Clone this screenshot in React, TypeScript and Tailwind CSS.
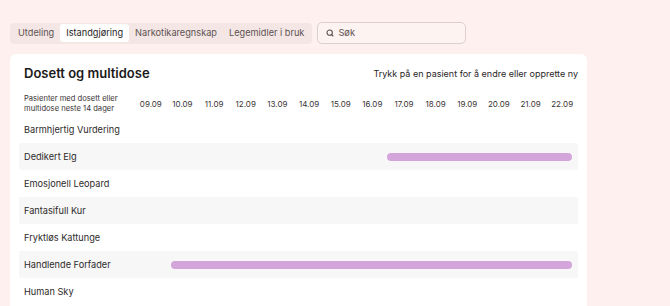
import React from "react";
import { Search } from "lucide-react";

const tabs = ["Utdeling", "Istandgjøring", "Narkotikaregnskap", "Legemidler i bruk"];

const dates = [
    "09.09", "10.09", "11.09", "12.09", "13.09", "14.09", "15.09",
    "16.09", "17.09", "18.09", "19.09", "20.09", "21.09", "22.09",
];

type Patient = { name: string; from?: number; to?: number };

// from/to are day indexes into the 14-day window (inclusive)
const patients: Patient[] = [
    { name: "Barmhjertig Vurdering" },
    { name: "Dedikert Elg", from: 8, to: 13 },
    { name: "Emosjonell Leopard" },
    { name: "Fantasifull Kur" },
    { name: "Fryktløs Kattunge" },
    { name: "Handlende Forfader", from: 1, to: 13 },
    { name: "Human Sky" },
];

const App: React.FC = () => {
    return (
        <div className="w-[670px] h-[306px] overflow-hidden bg-[#fdf0ee] font-['Inter',sans-serif] text-[#2a2626]">
            <div className="flex items-center gap-[5px] pl-[10px] pt-[22px]">
                <div className="flex items-center h-[21px] px-[2px] rounded-[4px] bg-[#f3e6e4]">
                    {tabs.map((tab, i) => (
                        <div
                            key={tab}
                            className={
                                i === 1
                                    ? "h-[18px] flex items-center px-[6px] rounded-[3px] bg-white text-[9.2px] text-[#1f1c1c]"
                                    : "h-[18px] flex items-center px-[6px] text-[9.2px] text-[#5e5252]"
                            }
                        >
                            {tab}
                        </div>
                    ))}
                </div>
                <div className="flex items-center gap-[4px] w-[149px] h-[22px] px-[8px] rounded-[5px] border border-[#dccfcd] bg-[#fdf3f1]">
                    <Search size={8} strokeWidth={3.2} className="text-[#5e5252]" />
                    <span className="text-[9.3px] text-[#5e5252]">Søk</span>
                </div>
            </div>

            <div className="mt-[10px] ml-[10px] w-[577px] h-[260px] bg-white rounded-t-[6px] px-[9px]">
                <div className="flex items-center justify-between h-[38px] pt-[1px] pl-[5px]">
                    <h1 className="text-[13px] font-semibold text-[#1c1a1a]">Dosett og multidose</h1>
                    <span className="text-[9px] text-[#2a2626]">
                        Trykk på en pasient for å endre eller opprette ny
                    </span>
                </div>

                <div className="grid grid-cols-[116px_repeat(14,1fr)] items-center h-[24px]">
                    <div className="pl-[5px] text-[7.6px] leading-[10px] text-[#3a3434]">
                        Pasienter med dosett eller
                        <br />
                        multidose neste 14 dager
                    </div>
                    {dates.map((d) => (
                        <div key={d} className="text-center text-[8px] text-[#3a3434]">
                            {d}
                        </div>
                    ))}
                </div>

                <div>
                    {patients.map((p, i) => (
                        <div
                            key={p.name}
                            className={
                                "grid grid-cols-[116px_repeat(14,1fr)] items-center h-[27px] pl-[5px] pr-[6px] rounded-[2px] " +
                                (i % 2 === 1 ? "bg-[#f7f7f7]" : "bg-white")
                            }
                        >
                            <div className="text-[9.2px] text-[#2e2a2a] whitespace-nowrap">{p.name}</div>
                            {p.from !== undefined && p.to !== undefined && (
                                <div
                                    className="h-[8px] rounded-full bg-[#d4a5db]"
                                    style={{ gridColumn: `${p.from + 2} / ${p.to + 3}` }}
                                />
                            )}
                        </div>
                    ))}
                </div>
            </div>
        </div>
    );
};

export default App;
